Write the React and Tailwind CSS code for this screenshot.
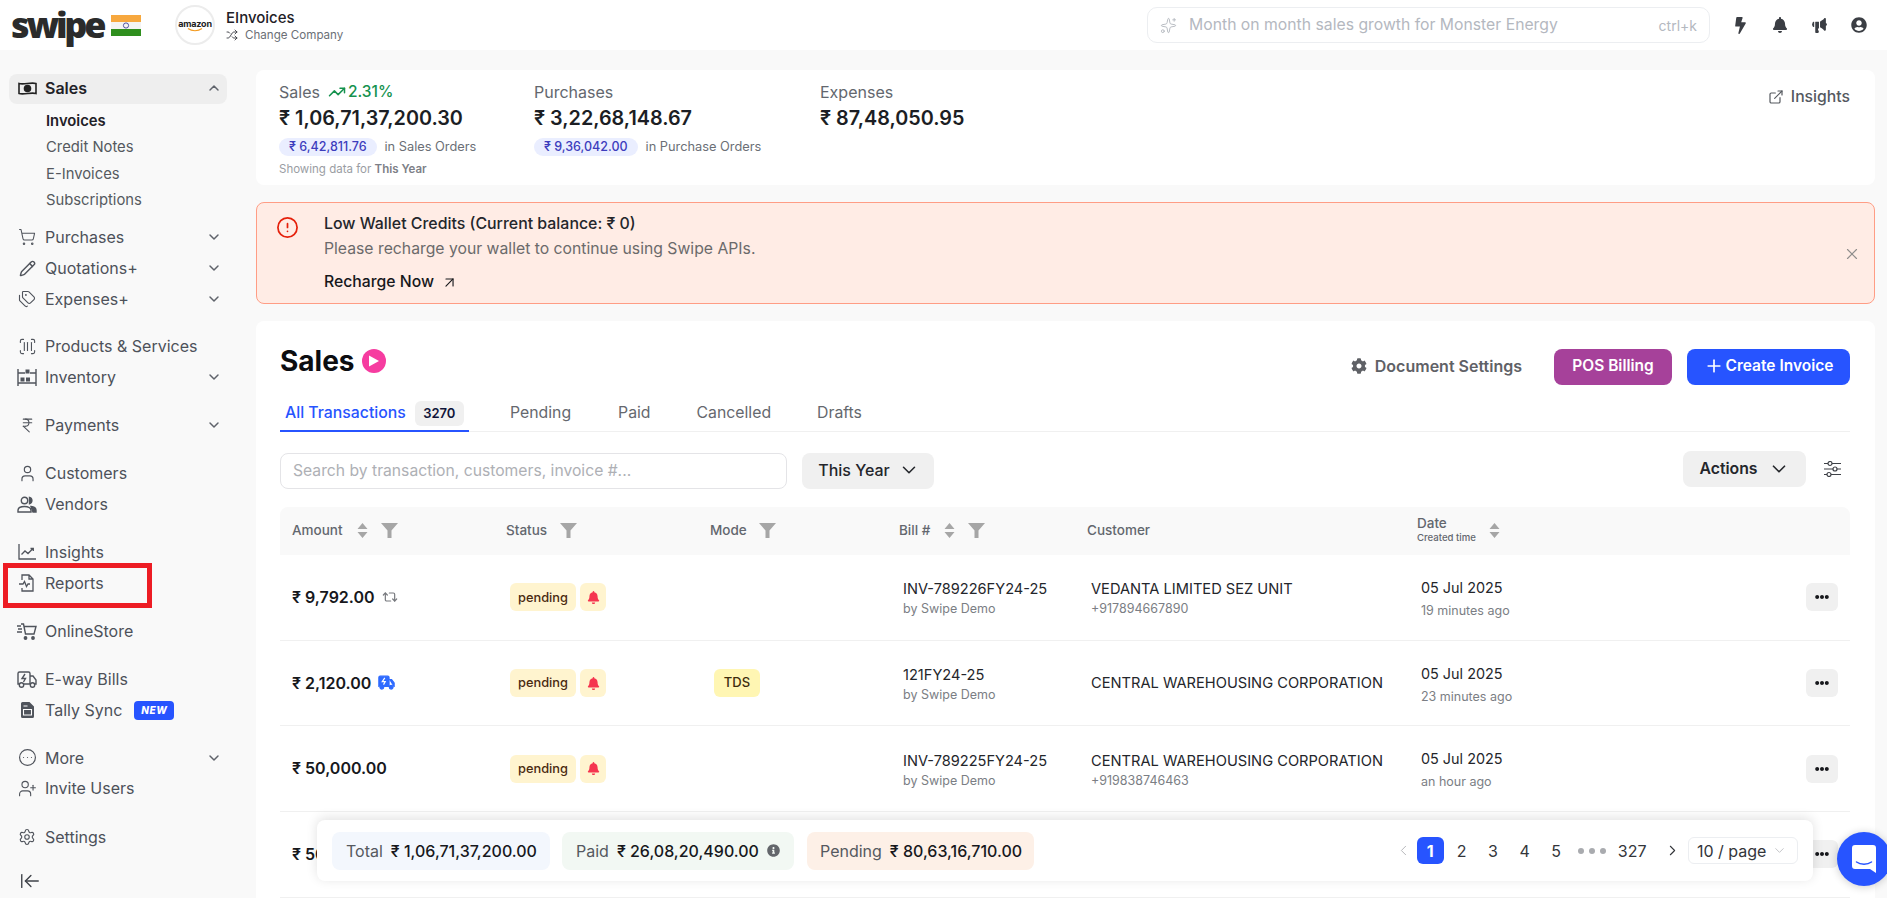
import React from 'react';
import {
  ArrowLeftToLine, ArrowUpRight, ChevronDown, ChevronLeft, ChevronRight, ChevronUp, CircleAlert, CircleEllipsis,
  ExternalLink, IndianRupee, Pencil, Plus, Repeat2, ScanBarcode, Settings, ShoppingCart, Shuffle,
  Sparkles, Tags, TrendingUp, User, UserPlus, X,
} from 'lucide-react';
import { FaBell, FaBolt, FaCog, FaInfoCircle, FaUserCircle, FaEllipsisH } from 'react-icons/fa';
import { IoMegaphone } from 'react-icons/io5';

function Flag() {
  return (
    <svg width="30" height="21" viewBox="0 0 30 21">
      <rect width="30" height="7" fill="#f7a83e" />
      <rect y="7" width="30" height="7" fill="#f4f4f4" />
      <rect y="14" width="30" height="7" fill="#2f8f1e" />
      <circle cx="15" cy="10.5" r="2.6" fill="none" stroke="#3c3f9a" strokeWidth="0.9" />
    </svg>
  );
}

function MoneyIcon() {
  return (
    <svg width="19" height="15" viewBox="0 0 19 15" fill="none" stroke="#222" strokeWidth="1.6">
      <path d="M1 2.5c5 1.6 12-1.6 17 0v10c-5-1.6-12 1.6-17 0z" />
      <circle cx="9.5" cy="7.5" r="3" fill="#222" />
    </svg>
  );
}

function ShelfIcon() {
  return (
    <svg width="20" height="17" viewBox="0 0 20 17" fill="none" stroke="#50545c" strokeWidth="1.4">
      <path d="M1 0v17M19 0v17M1 4h7M13 4h6M1 14h18" />
      <rect x="8.5" y="0.5" width="4" height="4" fill="#50545c" stroke="none" />
      <rect x="3.5" y="8.5" width="4" height="4" fill="#50545c" stroke="none" />
      <rect x="9" y="8.5" width="4" height="4" fill="#50545c" stroke="none" />
    </svg>
  );
}

function VendorsIcon() {
  return (
    <svg width="20" height="17" viewBox="0 0 20 17" fill="none" stroke="#50545c" strokeWidth="1.4">
      <circle cx="7.5" cy="4.5" r="3.2" />
      <path d="M1 16v-1.5c0-2.5 2.5-4 6.5-4s6.5 1.500 6.500 4V16z" />
      <path d="M12.500 1.500a3.200 3.200 0 0 1 0 6.200z" fill="#50545c" />
      <path d="M14 10.500c3 .2 5 1.700 5 4V16h-3z" fill="#50545c" />
    </svg>
  );
}

function InsightIcon() {
  return (
    <svg width="18" height="16" viewBox="0 0 18 16" fill="none" stroke="#50545c" strokeWidth="1.3">
      <path d="M1 0v15h17" />
      <path d="M3.500 10.500l3.500-3.500 3 2.500 5-5M12.500 4.500h2.800v2.600" />
    </svg>
  );
}

function ReportIcon() {
  return (
    <svg width="16" height="18" viewBox="0 0 16 18" fill="none" stroke="#50545c" strokeWidth="1.3">
      <path d="M3 6V1h7l4 4v12H3v-3M10 1v4h4" />
      <path d="M0 10h4l1.500-2.500 2 5 1.500-2.500h2" />
    </svg>
  );
}

function StoreIcon() {
  return (
    <svg width="20" height="17" viewBox="0 0 20 17" fill="none" stroke="#50545c" strokeWidth="1.4">
      <path d="M4 1h2.500l2 10h8.500l2-7.500H7" />
      <circle cx="8.500" cy="15" r="1.200" fill="#50545c" />
      <circle cx="16" cy="15" r="1.200" fill="#50545c" />
      <path d="M0 3h4M1 6h4M0 9h5" />
    </svg>
  );
}

function TruckIcon({ color = '#50545c', filled = false, w = 20, h = 17 }) {
  return (
    <svg width={w} height={h} viewBox="0 0 20 17" fill={filled ? color : 'none'} stroke={color} strokeWidth="1.4">
      <path d="M2 13H1V2.500A1.500 1.500 0 0 1 2.500 1h9A1.500 1.500 0 0 1 13 2.500V13H7" />
      <path d="M13 5h3l3 4v4h-1" />
      <path d="M13 13h0" />
      <circle cx="4.500" cy="14" r="2.200" fill={filled ? color : 'none'} />
      <circle cx="15.500" cy="14" r="2.200" fill={filled ? color : 'none'} />
      <path d="M8 3L5 7.500h3.500L6.500 11" stroke={filled ? '#fff' : color} fill="none" />
    </svg>
  );
}

function DocIcon() {
  return (
    <svg width="13" height="16" viewBox="0 0 13 16">
      <path d="M1.500 0H8.500L13 4.500V14.500A1.500 1.500 0 0 1 11.500 16H1.500A1.500 1.500 0 0 1 0 14.500V1.500A1.500 1.500 0 0 1 1.500 0z" fill="#50545c" />
      <path d="M2.500 4h4M2.500 7.500h8v5.500h-8z" stroke="#fff" strokeWidth="1.100" fill="none" />
    </svg>
  );
}

function FunnelIcon() {
  return (
    <svg width="17" height="15" viewBox="0 0 17 15" fill="#a6a6a6">
      <path d="M0 0h17L10.500 7.500V15H6.500V7.500z" />
    </svg>
  );
}

function SortIcon() {
  return (
    <svg width="11" height="15" viewBox="0 0 11 15" fill="#a6a6a6">
      <path d="M5.500 0L10.500 6H.5zM.5 9h10l-5 6z" />
    </svg>
  );
}

function TuneIcon() {
  return (
    <svg width="17" height="16" viewBox="0 0 17 16" fill="none" stroke="#3e4147" strokeWidth="1.200">
      <path d="M0 2.500h4M8 2.500h9M0 8h9M13 8h4M0 13.500h3M7 13.500h10" />
      <circle cx="6" cy="2.500" r="2" />
      <circle cx="11" cy="8" r="2" />
      <circle cx="5" cy="13.500" r="2" />
    </svg>
  );
}

function NavItem({ icon, label, chevron, badge, children, className = '' }) {
  return (
    <div className={`relative flex h-[31px] items-center pl-2 pr-2 text-[16px] text-[#4d5159] ${className}`}>
      <span className="flex w-[20px] justify-center">{icon}</span>
      <span className="ml-2">{label}</span>
      {badge && (
        <span className="ml-3 rounded-[4px] bg-[#2754ff] px-[7px] py-[3px] text-[10px] leading-[13px] font-extrabold italic tracking-wider text-white">
          NEW
        </span>
      )}
      {chevron && <ChevronDown size={16} strokeWidth={2.2} className="ml-auto mr-[-3px] text-[#5f636b]" />}
      {children}
    </div>
  );
}

function Sidebar() {
  const iconClass = 'text-[#50545c]';
  return (
    <aside className="flex w-[256px] shrink-0 flex-col pl-[9px] pr-[29px] pt-6">
      <div className="flex h-[30px] items-center rounded-lg bg-[#eeeeee] pb-[2px] pl-2 pr-2 text-[16px] font-semibold text-[#1f2127]">
        <span className="flex w-[20px] justify-center"><MoneyIcon /></span>
        <span className="ml-2">Sales</span>
        <ChevronUp size={16} strokeWidth={2.2} className="ml-auto mr-[-3px] text-[#5f636b]" />
      </div>
      <div className="mt-1 flex flex-col pl-[37px] text-[14.800px] text-[#55595f]">
        <div className="flex h-[26.4px] items-center font-semibold text-[#1f2127]">Invoices</div>
        <div className="flex h-[26.4px] items-center">Credit Notes</div>
        <div className="flex h-[26.4px] items-center">E-Invoices</div>
        <div className="flex h-[26.4px] items-center">Subscriptions</div>
      </div>
      <NavItem className="mt-[8px]" icon={<ShoppingCart size={18} strokeWidth={1.4} className={iconClass} />} label="Purchases" chevron />
      <NavItem icon={<Pencil size={17} strokeWidth={2} className={iconClass} />} label="Quotations+" chevron />
      <NavItem icon={<Tags size={18} strokeWidth={1.5} className={iconClass} />} label="Expenses+" chevron />

      <NavItem className="mt-[16px]" icon={<ScanBarcode size={19} strokeWidth={1.4} className={iconClass} />} label="Products & Services" />
      <NavItem icon={<ShelfIcon />} label="Inventory" chevron />

      <NavItem className="mt-[17px]" icon={<IndianRupee size={17} strokeWidth={1.5} className={iconClass} />} label="Payments" chevron />

      <NavItem className="mt-[17px]" icon={<User size={19} strokeWidth={1.5} className={iconClass} />} label="Customers" />
      <NavItem icon={<VendorsIcon />} label="Vendors" />

      <NavItem className="mt-[17px]" icon={<InsightIcon />} label="Insights" />
      <NavItem icon={<ReportIcon />} label="Reports">
        <div className="absolute left-[-6px] top-[-4.500px] h-[45px] w-[149px] border-[5px] border-[#ed1c24]" />
      </NavItem>

      <NavItem className="mt-[17px]" icon={<StoreIcon />} label="OnlineStore" />

      <NavItem className="mt-[17px]" icon={<TruckIcon />} label="E-way Bills" />
      <NavItem icon={<DocIcon />} label="Tally Sync" badge />

      <NavItem className="mt-[16.500px]" icon={<CircleEllipsis size={19} strokeWidth={1.5} className={iconClass} />} label="More" chevron />
      <NavItem className="mt-[-0.500px]" icon={<UserPlus size={19} strokeWidth={1.4} className={iconClass} />} label="Invite Users" />

      <NavItem className="mt-[18px]" icon={<Settings size={18} strokeWidth={1.5} className={iconClass} />} label="Settings" />
      <div className="mt-[13px] flex h-[31px] items-center pl-[10px]">
        <ArrowLeftToLine size={22} strokeWidth={1.5} className="text-[#3f4349]" />
      </div>
    </aside>
  );
}

function Header() {
  return (
    <header className="flex h-[50px] shrink-0 items-center bg-white pl-[11px] pr-[20px]">
      <span className="w-[100px] font-['Open_Sans',sans-serif] text-[36px] leading-none font-extrabold tracking-[-0.09em] text-[#2b2b2b]">swipe</span>
      <Flag />
      <div className="ml-[34px] flex h-[40px] w-[40px] flex-col items-center justify-center rounded-full border-2 border-[#ececec]">
        <span className="text-[9px] leading-[9px] font-bold tracking-[-0.02em] text-[#222]">amazon</span>
        <svg width="20" height="4" viewBox="0 0 20 4" fill="none" stroke="#f39a1f" strokeWidth="1.200"><path d="M3 0.500c4 3 10 3 14 0" /></svg>
      </div>
      <div className="ml-[11px] flex flex-col">
        <span className="text-[15px] leading-[19px] font-medium text-[#1f2127]">EInvoices</span>
        <span className="flex items-center gap-[7px] text-[11.600px] leading-[16px] text-[#6b6f76]">
          <Shuffle size={12} strokeWidth={1.8} className="text-[#3d4046]" />
          Change Company
        </span>
      </div>
      <div className="ml-auto flex h-[36px] w-[563px] items-center rounded-[10px] border border-[#eceef1] px-[12px]">
        <Sparkles size={17} strokeWidth={1.3} className="text-[#b4b8bf]" />
        <span className="ml-[12px] text-[15.750px] text-[#b4b8bf]">Month on month sales growth for Monster Energy</span>
        <span className="ml-auto text-[14px] text-[#b4b8bf]">ctrl+k</span>
      </div>
      <div className="ml-[22px] flex items-center gap-[23px] text-[#3b3e44]">
        <FaBolt size={17} />
        <FaBell size={16} />
        <IoMegaphone size={17} />
        <FaUserCircle size={16} />
      </div>
    </header>
  );
}

function Stat({ label, amount, extra, pill, pillText, footer, className }) {
  return (
    <div className={className}>
      <div className="flex h-[22px] items-center text-[16px] text-[#63676e]">
        {label}
        {extra}
      </div>
      <div className="mt-[2px] text-[19.800px] leading-[26px] font-semibold text-[#1c1e24]">₹ {amount}</div>
      {pill && (
        <div className="mt-[6px] flex items-center">
          <span className="rounded-full bg-[#eaeeff] px-[10px] text-[12.500px] leading-[18px] font-medium text-[#3d3dbd]">₹ {pill}</span>
          <span className="ml-2 text-[12.800px] text-[#6b6f76]">{pillText}</span>
        </div>
      )}
      {footer}
    </div>
  );
}

function SummaryCard() {
  return (
    <div className="flex h-[115px] shrink-0 rounded-lg bg-white pl-[23px] pr-[25px] pt-[11px]">
      <Stat
        className="w-[255px]"
        label="Sales"
        amount="1,06,71,37,200.30"
        pill="6,42,811.76"
        pillText="in Sales Orders"
        extra={
          <span className="ml-2 flex items-center gap-[2px] text-[15.500px] font-medium text-[#15924e]">
            <TrendingUp size={18} strokeWidth={2} /> 2.31%
          </span>
        }
        footer={<div className="mt-[5px] text-[11.500px] leading-[16px] text-[#9a9da3]">Showing data for <span className="font-semibold text-[#7d8087]">This Year</span></div>}
      />
      <Stat className="w-[286px]" label="Purchases" amount="3,22,68,148.67" pill="9,36,042.00" pillText="in Purchase Orders" />
      <Stat label="Expenses" amount="87,48,050.95" />
      <div className="ml-auto mt-[5px] flex h-[22px] items-center gap-[7px] text-[15.750px] font-medium text-[#55595f]">
        <ExternalLink size={16} strokeWidth={1.8} /> Insights
      </div>
    </div>
  );
}

function WalletAlert() {
  return (
    <div className="mt-[17px] flex h-[102px] shrink-0 rounded-lg border border-[#ff9d85] bg-[#ffece5] pl-[19px] pr-[13px] pt-[11px]">
      <CircleAlert size={23} strokeWidth={1.8} className="mt-[2px] text-[#e5200b]" />
      <div className="ml-[25px] flex flex-col">
        <span className="text-[15.900px] leading-[20px] font-medium text-[#24262b]">Low Wallet Credits (Current balance: ₹ 0)</span>
        <span className="mt-[5px] text-[15.750px] leading-[20px] text-[#6b6a6b]">Please recharge your wallet to continue using Swipe APIs.</span>
        <span className="mt-[13px] flex items-center gap-[7px] text-[15.750px] leading-[20px] font-medium text-[#17181c]">
          Recharge Now <ArrowUpRight size={17} strokeWidth={1.6} />
        </span>
      </div>
      <X size={18} strokeWidth={1.5} className="ml-auto mt-[31px] text-[#8f8d8c]" />
    </div>
  );
}

const rows = [
  { amount: '9,792.00', icon: <Repeat2 size={16} strokeWidth={1.8} className="text-[#77797e]" />, bill: 'INV-789226FY24-25', customer: 'VEDANTA LIMITED SEZ UNIT', phone: '+917894667890', ago: '19 minutes ago' },
  { amount: '2,120.00', icon: <TruckIcon color="#2f6bff" filled w={17} h={15} />, mode: 'TDS', bill: '121FY24-25', customer: 'CENTRAL WAREHOUSING CORPORATION', ago: '23 minutes ago' },
  { amount: '50,000.00', bill: 'INV-789225FY24-25', customer: 'CENTRAL WAREHOUSING CORPORATION', phone: '+919838746463', ago: 'an hour ago' },
  { amount: '50,000.00' },
];

const columns = 'grid grid-cols-[214px_204px_189px_188px_330px_400px_1fr]';

function TableRow({ row }) {
  return (
    <div className={`${columns} h-[85.700px] items-center border-b border-[#f0f0f0]`}>
      <div className="flex items-center gap-[7px] pb-[1px] pl-[12px] text-[16px] font-semibold text-[#17181c]">
        ₹ {row.amount} {row.icon}
      </div>
      {row.bill ? (
        <div className="flex items-center gap-[4px] pl-[16px]">
          <span className="flex h-[28px] w-[66px] items-center justify-center rounded-md bg-[#fff4cf] text-[12.800px] font-medium text-[#4a2a10]">pending</span>
          <span className="flex h-[28px] w-[26px] items-center justify-center rounded-md bg-[#fff4cf]"><FaBell size={13} className="text-[#f5354f]" /></span>
        </div>
      ) : <div />}
      <div className="pl-[16px]">
        {row.mode && (
          <span className="flex h-[28px] w-[46px] items-center justify-center rounded-md bg-[#fff6b3] text-[13px] font-medium text-[#3e2c0c]">{row.mode}</span>
        )}
      </div>
      <div className="flex flex-col pl-[16px] pt-[4px]">
        <span className="text-[14.600px] leading-[20px] text-[#24262b]">{row.bill}</span>
        {row.bill && <span className="text-[12.500px] leading-[20px] text-[#7b7e84]">by Swipe Demo</span>}
      </div>
      <div className={`flex flex-col pl-[16px] ${row.phone ? 'pt-[4px]' : ''}`}>
        <span className="text-[14.650px] leading-[20px] text-[#24262b]">{row.customer}</span>
        {row.phone && <span className="text-[12.500px] leading-[20px] text-[#7b7e84]">{row.phone}</span>}
      </div>
      {row.bill ? (
        <div className="flex flex-col pl-[16px] pt-[4px]">
          <span className="text-[14.400px] leading-[20px] text-[#24262b]">05 Jul 2025</span>
          <span className="mt-[3px] text-[12.500px] leading-[20px] text-[#7b7e84]">{row.ago}</span>
        </div>
      ) : <div />}
      <div className="flex justify-end">
        <span className="mr-[12px] flex h-[28px] w-[32px] items-center justify-center rounded-md bg-[#f0f0f0]"><FaEllipsisH size={14} className="text-[#17181c]" /></span>
      </div>
    </div>
  );
}

function SalesTable() {
  return (
    <div className="mt-[18px]">
      <div className={`${columns} h-[48px] items-center rounded-t-lg bg-[#f9f9f9] pb-[2px] text-[13.500px] font-medium text-[#63676e]`}>
        <div className="flex items-center pl-[12px]">Amount<span className="ml-[14px]"><SortIcon /></span><span className="ml-[13px]"><FunnelIcon /></span></div>
        <div className="flex items-center gap-[13px] pl-[12px]">Status <FunnelIcon /></div>
        <div className="flex items-center gap-[12px] pl-[12px]">Mode <FunnelIcon /></div>
        <div className="flex items-center pl-[12px]">Bill #<span className="ml-[14px]"><SortIcon /></span><span className="ml-[13px]"><FunnelIcon /></span></div>
        <div className="pl-[12px]">Customer</div>
        <div className="flex items-center pl-[12px]">
          <div className="flex flex-col">
            <span className="leading-[16px]">Date</span>
            <span className="text-[9.600px] leading-[14px]">Created time</span>
          </div>
          <span className="ml-[13px]"><SortIcon /></span>
        </div>
        <div />
      </div>
      {rows.map((row, i) => <TableRow key={i} row={row} />)}
    </div>
  );
}

function SalesCard() {
  return (
    <div className="mt-[17px] flex-1 rounded-t-lg bg-white pl-[24px] pr-[25px] pt-[28px]">
      <div className="flex h-[36px] items-center">
        <div className="mb-[12px] flex items-center">
          <h1 className="text-[28px] leading-none font-bold text-[#0c0d10]">Sales</h1>
          <span className="ml-[7px] flex h-[24px] w-[24px] items-center justify-center rounded-full bg-[#f63ca0]">
            <svg width="11" height="12" viewBox="0 0 11 12" fill="#fff"><path d="M1 0.500L11 6 1 11.500z" /></svg>
          </span>
        </div>
        <span className="ml-auto flex items-center gap-[8px] pb-[2px] text-[16px] font-semibold text-[#5f6166]"><FaCog size={16} /> Document Settings</span>
        <button className="ml-[32px] h-[36px] w-[118px] rounded-lg bg-[#a6419a] pb-[2px] text-[15.500px] font-semibold text-white">POS Billing</button>
        <button className="ml-[15px] flex h-[36px] w-[163px] items-center justify-center gap-[2px] rounded-lg bg-[#2754ff] pb-[2px] text-[15.500px] font-semibold text-white"><Plus size={20} strokeWidth={2} /> Create Invoice</button>
      </div>
      <div className="mt-[13px] flex h-[34px] items-start border-b border-[#f0f0f0] text-[15.800px] text-[#65686e]">
        <div className="flex h-[34px] w-[189px] items-start border-b-2 border-[#2754ff] pl-[5px] pt-[3px]">
          <span className="font-medium text-[#2754ff]">All Transactions</span>
          <span className="ml-[9px] flex h-[25px] w-[49px] items-center justify-center rounded-md bg-[#f0f0f0] text-[13px] font-semibold text-[#10153a]">3270</span>
        </div>
        <span className="ml-[41px] mt-[3px]">Pending</span>
        <span className="ml-[47px] mt-[3px]">Paid</span>
        <span className="ml-[46px] mt-[3px]">Cancelled</span>
        <span className="ml-[46px] mt-[3px]">Drafts</span>
      </div>
      <div className="mt-[21px] flex items-center">
        <div className="flex h-[36px] w-[507px] items-center rounded-lg border border-[#e4e4e7] px-[12px] text-[15.700px] text-[#aeb0b5]">Search by transaction, customers, invoice #...</div>
        <div className="ml-[15px] flex h-[36px] w-[132px] items-center justify-center gap-[8px] rounded-lg bg-[#f0f0f0] pb-[2px] pl-[2px] text-[16px] font-medium text-[#24262b]">This Year <ChevronDown size={22} strokeWidth={1.7} /></div>
        <div className="ml-auto mt-[-4px] flex h-[36px] w-[123px] items-center justify-center gap-[10px] rounded-lg bg-[#f0f0f0] text-[15.800px] font-semibold text-[#24262b]">Actions <ChevronDown size={22} strokeWidth={1.8} /></div>
        <span className="ml-[18px] mr-[9px] mt-[-4px]"><TuneIcon /></span>
      </div>
      <SalesTable />
    </div>
  );
}

function Totals() {
  return (
    <div className="absolute left-[317px] top-[820px] flex h-[61px] w-[1496px] items-center rounded-lg bg-white pl-[15px] pr-[15px] shadow-[0_-2px_12px_rgba(0,0,0,0.12)]">
      <div className="flex h-[38px] w-[218px] items-center rounded-lg bg-[#f3f7fd] pl-[14px] text-[16px] text-[#55595f]">
        Total <span className="ml-[8px] font-medium text-[#17181c]">₹ 1,06,71,37,200.00</span>
      </div>
      <div className="ml-[12px] flex h-[38px] w-[232px] items-center rounded-lg bg-[#f2f8f3] pl-[14px] text-[16px] text-[#55595f]">
        Paid <span className="ml-[8px] font-medium text-[#17181c]">₹ 26,08,20,490.00</span>
        <FaInfoCircle size={13} className="ml-[8px] text-[#63666b]" />
      </div>
      <div className="ml-[13px] flex h-[38px] w-[227px] items-center rounded-lg bg-[#fdf0e7] pl-[13px] text-[16px] text-[#55595f]">
        Pending <span className="ml-[8px] font-medium text-[#17181c]">₹ 80,63,16,710.00</span>
      </div>
      <div className="ml-auto flex items-center text-[16px] text-[#33353a]">
        <ChevronLeft size={17} strokeWidth={1.3} className="text-[#b0b2b6]" />
        <span className="ml-[4.500px] flex h-[27px] w-[27px] items-center justify-center rounded-md bg-[#2754ff] font-bold text-white">1</span>
        <span className="ml-[2px] w-[31.500px] text-center">2</span>
        <span className="w-[31.500px] text-center">3</span>
        <span className="w-[31.500px] text-center">4</span>
        <span className="w-[31.500px] text-center">5</span>
        <span className="ml-[6px] flex gap-[5px]">
          <span className="h-[6px] w-[6px] rounded-full bg-[#a9abaf]" />
          <span className="h-[6px] w-[6px] rounded-full bg-[#a9abaf]" />
          <span className="h-[6px] w-[6px] rounded-full bg-[#a9abaf]" />
        </span>
        <span className="ml-[12px]">327</span>
        <ChevronRight size={17} strokeWidth={1.5} className="ml-[17px]" />
        <div className="ml-[7.500px] flex h-[27px] w-[110px] items-center justify-between rounded-md border border-[#eceef1] pl-[8px] pr-[10px]">
          10 / page <ChevronDown size={15} strokeWidth={1.2} className="text-[#b0b2b6]" />
        </div>
      </div>
    </div>
  );
}

function ChatBubble() {
  return (
    <div className="absolute left-[1837px] top-[832px] flex h-[54px] w-[54px] items-center justify-center rounded-full bg-[#2754ff] shadow-[0_1px_8px_rgba(0,0,0,0.2)]">
      <svg width="24" height="28" viewBox="0 0 24 28">
        <path d="M3 0h18a3 3 0 0 1 3 3v25l-6-4H3a3 3 0 0 1-3-3V3a3 3 0 0 1 3-3z" fill="#fff" />
        <path d="M4.500 17c4 3 11 3 15 0" fill="none" stroke="#2754ff" strokeWidth="1.500" strokeLinecap="round" />
      </svg>
    </div>
  );
}

export default function App() {
  return (
    <div className="relative flex h-screen flex-col overflow-hidden bg-[#f9f9f9] font-['Inter',sans-serif]">
      <Header />
      <div className="flex min-h-0 flex-1">
        <Sidebar />
        <main className="flex min-w-0 flex-1 flex-col pr-[12px] pt-[20px]">
          <SummaryCard />
          <WalletAlert />
          <SalesCard />
        </main>
      </div>
      <Totals />
      <ChatBubble />
    </div>
  );
}
